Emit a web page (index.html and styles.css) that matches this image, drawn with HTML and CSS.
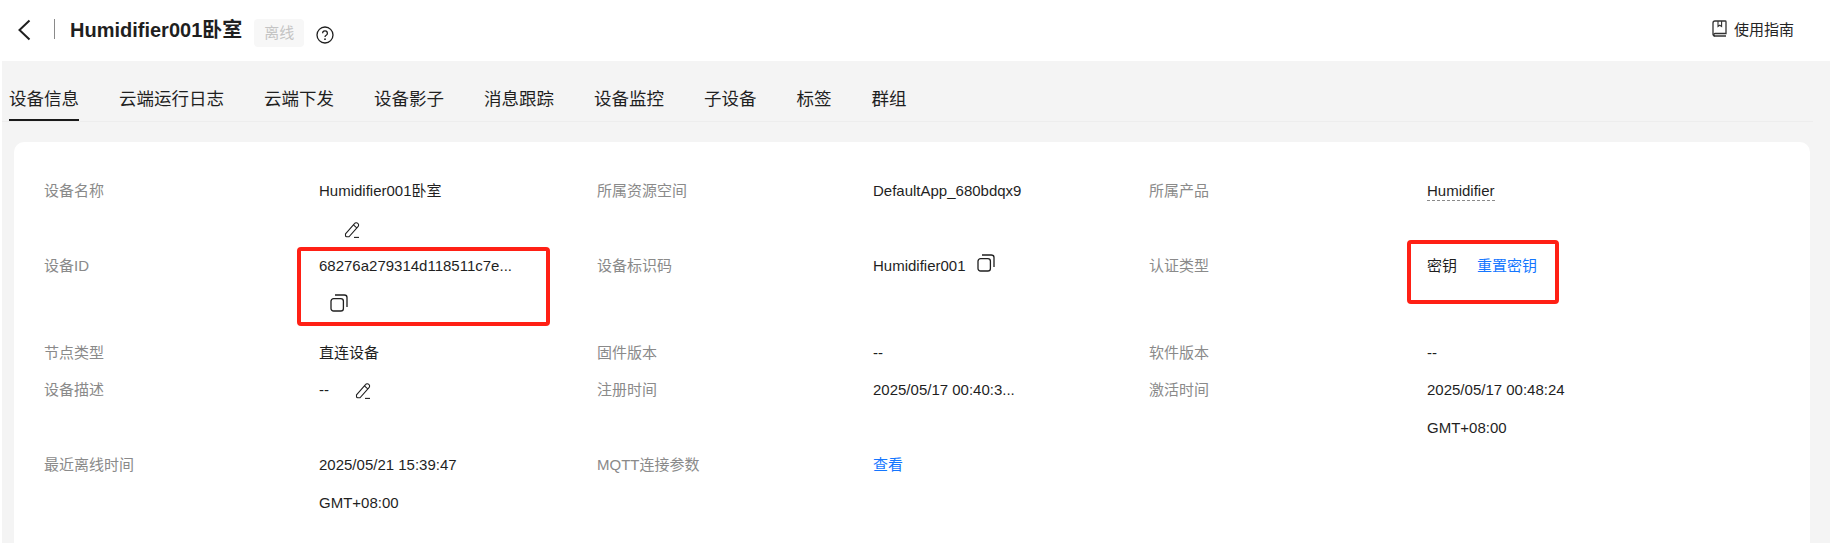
FILE: index.html
```html
<!DOCTYPE html>
<html lang="zh">
<head>
<meta charset="utf-8">
<title>Humidifier001卧室</title>
<link rel="stylesheet" href="styles.css">
</head>
<body>
<header class="topbar">
  <svg class="back" width="14" height="22" viewBox="0 0 14 22"><path d="M12.5 1.5 2.5 11l10 9.5" fill="none" stroke="#1f1f1f" stroke-width="2"/></svg>
  <span class="divider"></span>
  <h1 class="title">Humidifier001卧室</h1>
  <span class="badge">离线</span>
  <svg class="help" width="18" height="18" viewBox="0 0 18 18"><circle cx="9" cy="9" r="8" fill="none" stroke="#1f1f1f" stroke-width="1.3"/><path d="M6.6 7.2a2.4 2.4 0 1 1 3.6 2.1c-.8.5-1.2.9-1.2 1.8" fill="none" stroke="#1f1f1f" stroke-width="1.3"/><circle cx="9" cy="13.2" r=".9" fill="#1f1f1f"/></svg>
  <a class="guide">
    <svg width="15" height="17" viewBox="0 0 15 17"><path d="M3 1h10.2a.8.8 0 0 1 .8.8V13.5H3a1.2 1.2 0 0 0 0 2.500h11" fill="none" stroke="#333" stroke-width="1.3"/><path d="M3 1a2 2 0 0 0-2 2v10.500a2 2 0 0 0 2 2.500" fill="none" stroke="#333" stroke-width="1.3"/><path d="M6 1v5.5l1.8-1.3 1.8 1.3V1" fill="none" stroke="#333" stroke-width="1.1"/></svg>
    <span>使用指南</span>
  </a>
</header>
<main class="page">
  <nav class="tabs">
    <span class="tab active">设备信息</span>
    <span class="tab">云端运行日志</span>
    <span class="tab">云端下发</span>
    <span class="tab">设备影子</span>
    <span class="tab">消息跟踪</span>
    <span class="tab">设备监控</span>
    <span class="tab">子设备</span>
    <span class="tab">标签</span>
    <span class="tab">群组</span>
  </nav>
  <section class="card">
    <div class="grid">
      <div class="label">设备名称</div>
      <div class="value">Humidifier001卧室
        <div class="icon-line pad-edit"><svg class="ico" width="18" height="18" viewBox="0 0 18 18"><use href="#pen"/></svg></div>
      </div>
      <div class="label">所属资源空间</div>
      <div class="value">DefaultApp_680bdqx9</div>
      <div class="label">所属产品</div>
      <div class="value"><span class="dashed">Humidifier</span></div>

      <div class="label">设备ID</div>
      <div class="value boxed">68276a279314d118511c7e...
        <div class="icon-block"><svg class="ico" width="18" height="18" viewBox="0 0 18 18"><use href="#copy"/></svg></div>
        <span class="redbox id-box"></span>
      </div>
      <div class="label">设备标识码</div>
      <div class="value">Humidifier001<svg class="ico inline-copy" width="18" height="18" viewBox="0 0 18 18"><use href="#copy"/></svg></div>
      <div class="label">认证类型</div>
      <div class="value boxed">密钥<a class="link reset">重置密钥</a>
        <span class="redbox key-box"></span>
      </div>

      <div class="label">节点类型</div>
      <div class="value">直连设备</div>
      <div class="label">固件版本</div>
      <div class="value">--</div>
      <div class="label">软件版本</div>
      <div class="value">--</div>

      <div class="label">设备描述</div>
      <div class="value">--<svg class="ico inline-edit" width="18" height="18" viewBox="0 0 18 18"><use href="#pen"/></svg></div>
      <div class="label">注册时间</div>
      <div class="value">2025/05/17 00:40:3...</div>
      <div class="label">激活时间</div>
      <div class="value">2025/05/17 00:48:24<br>GMT+08:00</div>

      <div class="label">最近离线时间</div>
      <div class="value">2025/05/21 15:39:47<br>GMT+08:00</div>
      <div class="label">MQTT连接参数</div>
      <div class="value"><a class="link">查看</a></div>
    </div>
  </section>
</main>
<svg class="defs" width="0" height="0">
  <defs>
    <g id="pen" fill="none" stroke="#1f1f1f" stroke-width="1.1">
      <path d="M1.5 12.8 10.5 2.600a2.300 2.300 0 0 1 3.300-.3 2.300 2.300 0 0 1 .2 3.300L5 15.800H2.800A1.400 1.400 0 0 1 1.500 14.400Z"/>
      <path d="M9.4 3.900l3.400 3"/>
      <path d="M10 16.400h5"/>
    </g>
    <g id="copy" fill="none" stroke="#1f1f1f" stroke-width="1.3">
      <rect x="1" y="4.6" width="12.4" height="12.4" rx="2.6"/>
      <path d="M5 1h9.4A2.6 2.6 0 0 1 17 3.6V13"/>
    </g>
  </defs>
</svg>
</body>
</html>
```

FILE: styles.css
```css
* { box-sizing: border-box; }
html, body { margin: 0; padding: 0; background: #fff; }
body {
  font-family: "Liberation Sans", "Noto Sans CJK SC", sans-serif;
  color: #1f1f1f;
  height: 546px;
  overflow: hidden;
}
.topbar {
  display: flex;
  align-items: flex-start;
  height: 61px;
  padding: 18px 36px 0 17px;
}
.back { margin-top: 1px; }
.divider {
  width: 1px;
  height: 20px;
  margin: 1px 15px 0 23px;
  background: #8a8a8a;
}
.title {
  margin: -2px 12px 0 0;
  font-size: 20px;
  line-height: 28px;
  font-weight: 700;
}
.badge {
  width: 50px;
  height: 28px;
  margin-top: 1px;
  border-radius: 4px;
  background: #f7f7f7;
  color: #c4c4c4;
  font-size: 15px;
  line-height: 28px;
  text-align: center;
}
.help { margin: 8px 0 0 12px; }
.guide {
  display: flex;
  align-items: center;
  gap: 7px;
  margin-left: auto;
  height: 20px;
  font-size: 15px;
  color: #252525;
}
.guide svg { margin-top: 1px; }
.page {
  margin-left: 2px;
  height: 482px;
  background: #f4f4f4;
}
.tabs {
  display: flex;
  gap: 40px;
  height: 61px;
  padding: 26px 0 0 7px;
  margin-right: 17px;
  border-bottom: 1px solid #ededed;
}
.tab {
  height: 34px;
  font-size: 17.5px;
  line-height: 25px;
  color: #1f1f1f;
}
.tab.active { border-bottom: 2px solid #1a1a1a; margin-bottom: -1px; }
.card {
  margin: 20px 20px 0 12px;
  height: 401px;
  padding: 30px 30px 0;
  background: #fff;
  border-radius: 10px 10px 0 0;
}
.grid {
  display: grid;
  grid-template-columns: 275px 278px 276px 276px 278px 1fr;
  grid-template-rows: 75px 87px 37px 75px 76px;
  font-size: 15px;
  line-height: 38px;
}
.label { color: #8a8a8a; }
.value { position: relative; }
.icon-line { height: 37px; display: flex; align-items: center; padding-top: 2px; }
.pad-edit { padding-left: 25px; }
.icon-block {
  height: 49px;
  padding: 9px 0 0 11px;
  display: flex;
  align-items: flex-start;
}
.ico { vertical-align: -2px; }
.inline-copy { margin-left: 11px; vertical-align: -3px; position: relative; top: -2px; }
.inline-edit { margin-left: 26px; vertical-align: -5px; }
.dashed { border-bottom: 1px dashed #8a8a8a; padding-bottom: 1px; }
.link { color: #1476ff; }
.reset { margin-left: 20px; }
.redbox {
  position: absolute;
  border: 4px solid #ff2015;
  border-radius: 4px;
  pointer-events: none;
}
.id-box { left: -22px; top: 0; width: 253px; height: 79px; }
.key-box { left: -20px; top: -7px; width: 152px; height: 64px; }
.defs { position: absolute; }
```
